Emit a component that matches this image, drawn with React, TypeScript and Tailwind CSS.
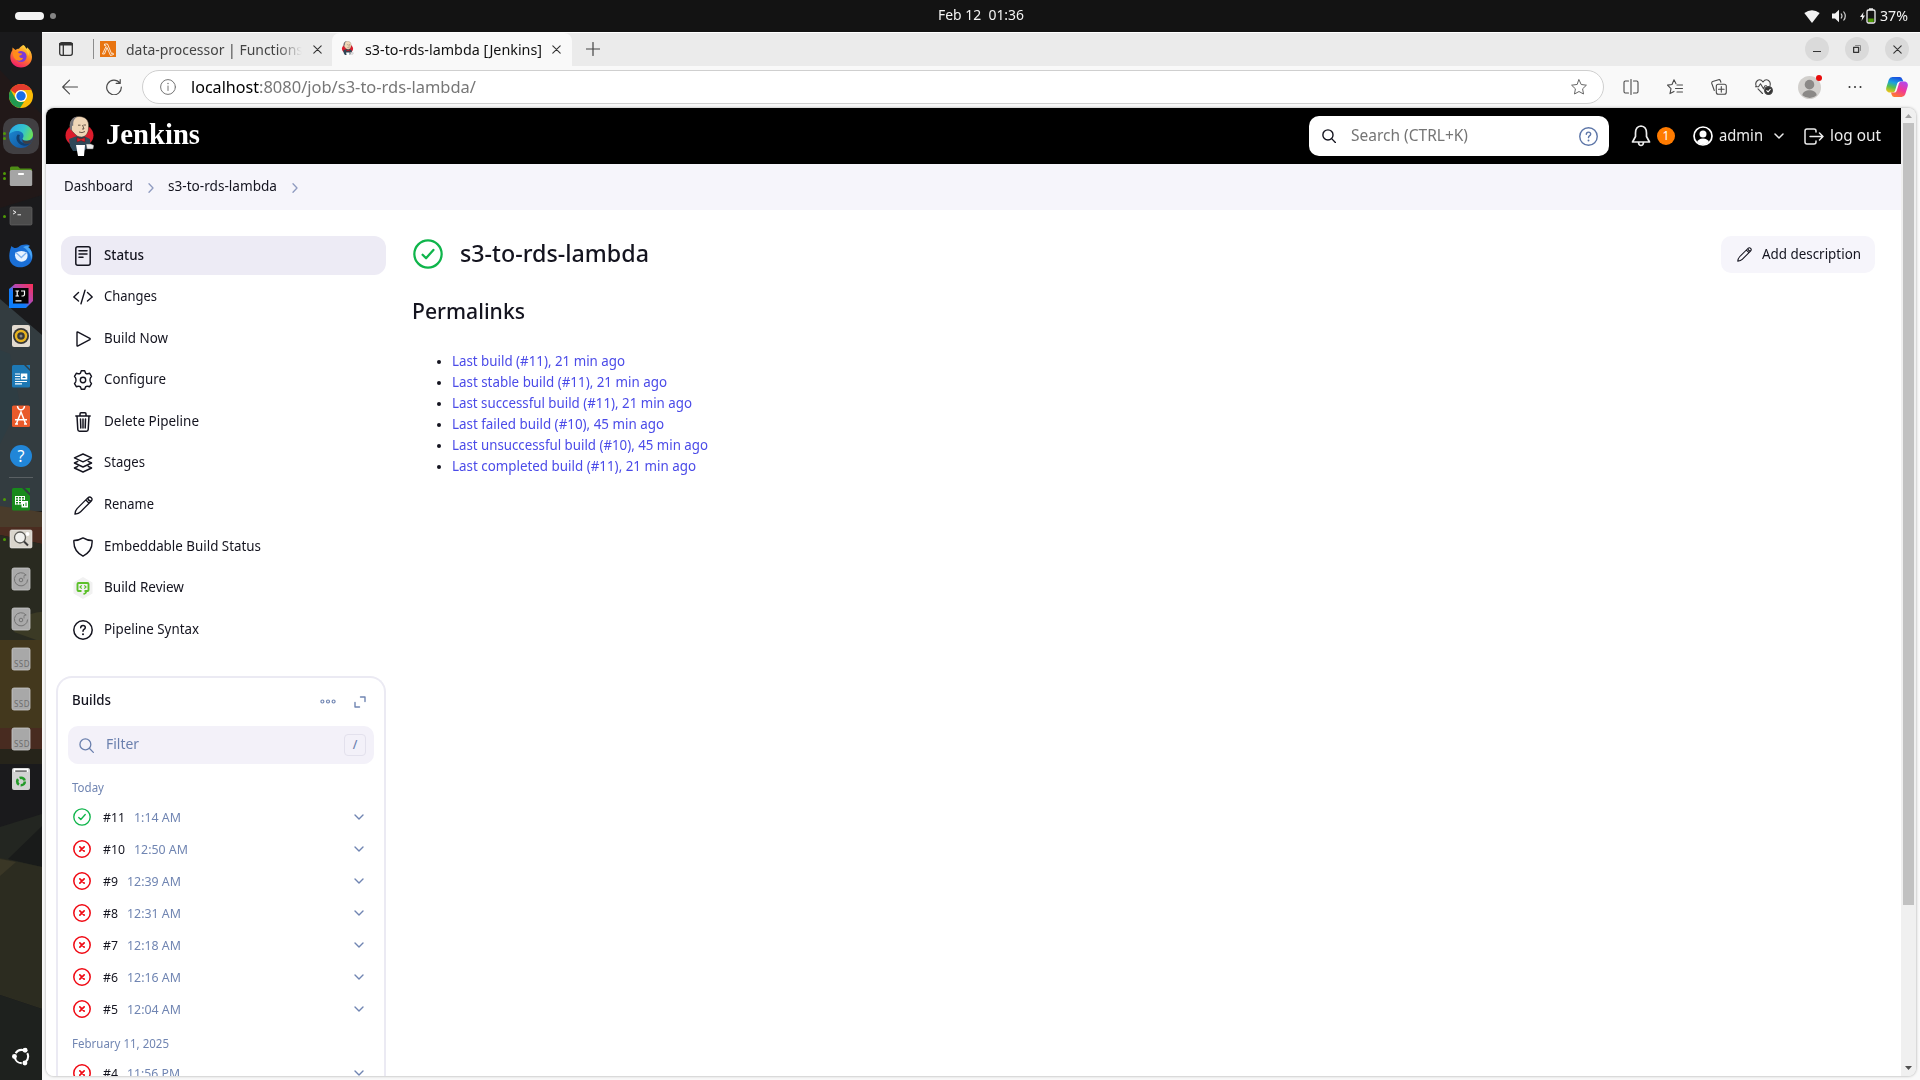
import { useLayoutEffect, useRef, type ReactNode } from "react";

/* One line of text condensed or widened to an exact advance width. */
function Fit({ w, className = "", children }: { w: number; className?: string; children: ReactNode }) {
  const ref = useRef<HTMLSpanElement>(null);
  useLayoutEffect(() => {
    const el = ref.current;
    if (!el) return;
    el.style.transform = `scaleX(${w / el.getBoundingClientRect().width})`;
    return () => {
      el.style.transform = "";
    };
  }, [w]);
  return (
    <span className={`block shrink-0 ${className}`} style={{ width: w }}>
      <span ref={ref} className="inline-block origin-left whitespace-pre align-top">
        {children}
      </span>
    </span>
  );
}

type SvgProps = { className?: string; children: ReactNode; box?: string; sw?: number };
function Line({ className = "", children, box = "0 0 24 24", sw = 1.5 }: SvgProps) {
  return (
    <svg viewBox={box} className={`shrink-0 ${className}`} fill="none" stroke="currentColor" strokeWidth={sw} strokeLinecap="round" strokeLinejoin="round">
      {children}
    </svg>
  );
}

function Pic({ className = "", children, box = "0 0 24 24" }: SvgProps) {
  return (
    <svg viewBox={box} className={`shrink-0 ${className}`}>
      {children}
    </svg>
  );
}

/* ---------- Dock ---------- */

function Disk() {
  return (
    <Pic className="h-6 w-6">
      <rect x="3" y="1" width="18" height="22" rx="2" fill="#aaaaaa" stroke="#c8c8c8" strokeWidth=".8" />
      <path d="M17 8a6.600 6.600 0 1 0 1.600 4.500" fill="none" stroke="#747474" strokeWidth="1" />
      <circle cx="12" cy="13" r="1.800" fill="none" stroke="#747474" />
      <path d="M15 11.500v-3l2.500-.5" stroke="#747474" fill="none" strokeWidth=".8" />
    </Pic>
  );
}

function Ssd() {
  return (
    <Pic className="h-6 w-6">
      <rect x="3" y="1" width="18" height="22" rx="2" fill="#a8a8a8" stroke="#c8c8c8" strokeWidth=".8" />
      <text x="5" y="20" fontSize="8" fill="#6e6e6e" fontFamily="Noto Sans, sans-serif" textLength="15.500">SSD</text>
    </Pic>
  );
}

const dockTop: { dots: number; icon: ReactNode; active?: boolean }[] = [
  {
    dots: 0,
    icon: (
      <Pic className="h-6 w-6">
        <defs>
          <linearGradient id="ff" x1=".8" y1="0" x2=".3" y2="1"><stop offset="0" stopColor="#ffe043" /><stop offset=".45" stopColor="#ff8a1f" /><stop offset="1" stopColor="#f0186e" /></linearGradient>
        </defs>
        <path d="M14.500 1c2 1.500 2.500 3 3 4 .5-.5.5-1.200.5-1.800C21 5.500 23 9 23 13c0 6-5 10.500-11 10.500S1.300 19 1.300 13c0-2.500.8-5 2-6.500L3.500 3.500l3 2.500c1-.8 2-1.200 3.500-1.200C11 3 13 1.500 14.500 1z" fill="url(#ff)" />
        <circle cx="12" cy="12.500" r="5.600" fill="#7c3ad8" />
        <path d="M4 8c3-1 5 0 6 1.200l3 .3c.3 1.500-2 2-2.800 2.300.2 2 2 2.700 4 2-1 3-5 4-8 1.500C4 13 3.500 10 4 8z" fill="#ff8b1a" />
        <path d="M13 1.800c3 3 6 4 6 10 1-1 1-4 0-6" fill="#ffd43a" />
      </Pic>
    ),
  },
  {
    dots: 0,
    icon: (
      <Pic className="h-6 w-6">
        <circle cx="12" cy="12" r="12" fill="#fbbc05" />
        <path d="M1.600 6A12 12 0 0 1 22.400 6H12a6 6 0 0 0-5.500 3.500z" fill="#e33b2e" />
        <path d="M1.600 6l5.200 9A6 6 0 0 0 12 18l3 0-4 6A12 12 0 0 1 1.600 6z" fill="#219a50" />
        <circle cx="12" cy="12" r="6" fill="#fff" />
        <circle cx="12" cy="12" r="4.700" fill="#1a6ee8" />
      </Pic>
    ),
  },
  {
    dots: 2,
    active: true,
    icon: (
      <Pic className="h-6 w-6">
        <defs>
          <linearGradient id="eg" x1="0" y1=".2" x2="1" y2=".5"><stop offset="0" stopColor="#2aa5e8" /><stop offset=".6" stopColor="#34c5cc" /><stop offset="1" stopColor="#6be05a" /></linearGradient>
          <linearGradient id="eb" x1="0" y1="0" x2="1" y2="1"><stop offset="0" stopColor="#1b8fd8" /><stop offset="1" stopColor="#124a94" /></linearGradient>
        </defs>
        <circle cx="12" cy="12" r="12" fill="url(#eb)" />
        <path d="M.2 10.500C1 4.500 6 0 12 0c7 0 12 5 12 10.500 0 4-3 6-6.500 6-3 0-4-1-4-1.800 0-.7 1-1.200 1-3 0-2.500-2.500-4.700-6-4.700C4.500 7 1 9 .2 10.500z" fill="url(#eg)" />
        <path d="M8.700 10.500C6 13 7.500 20 14 21.500c3 .7 6-.5 7.500-2.500-3 1.300-10 1-11-4-.3-1.800 0-3 .5-4z" fill="#11406f" />
        <path d="M13.500 14.500c-.3 1.500 1.500 2.700 4.500 2.500 2 0 4-.7 5.500-2-.4 1.800-1 3-1.800 4-5 2-9.200.5-8.200-4.500z" fill="#403e44" />
      </Pic>
    ),
  },
  {
    dots: 2,
    icon: (
      <Pic className="h-6 w-6">
        <path d="M1 4a1.500 1.500 0 0 1 1.500-1.500H9l2 2h10.500A1.500 1.500 0 0 1 23 6v6H1z" fill="#4e8c16" />
        <rect x=".8" y="6" width="22.400" height="16" rx="1.500" fill="#a5a5a5" />
        <rect x="9" y="9" width="6" height="2" rx=".8" fill="#fff" />
      </Pic>
    ),
  },
  {
    dots: 1,
    icon: (
      <Pic className="h-6 w-6">
        <rect x="1" y="3" width="22" height="18" rx="1.500" fill="#4c4c4c" stroke="#666" strokeWidth=".7" />
        <path d="M4 6.500l3 1.800-3 1.800M8.500 10.800h3.500" stroke="#eee" fill="none" />
      </Pic>
    ),
  },
  {
    dots: 0,
    icon: (
      <Pic className="h-6 w-6">
        <path d="M2.500 2c2.500 2.500 4.500 2.500 7 1C13 0 19 0 21 2c-1 0-2 .3-2 1 6 4 6 14 0 18-6 4-15 3-18-4C-.5 12 .5 7 2.500 2z" fill="#1a6fd6" />
        <path d="M14 3c4-2 7-1 7-1l-2 1c4 3 5 8 3 13 0-6-3-10-8-13z" fill="#4aa6f5" />
        <path d="M6.500 8.500q6-3 11.500 0 1.500 4.500-1 7.500-4.500 3.500-9 0-3-3-1.500-7.500z" fill="#e9f3ff" />
        <path d="M7 8.500l5.300 5 5.300-5" stroke="#7fb2ee" fill="none" strokeWidth="1.300" />
      </Pic>
    ),
  },
  {
    dots: 0,
    icon: (
      <Pic className="h-6 w-6">
        <defs><linearGradient id="ij" x1="1" y1="0" x2="0" y2="1"><stop offset="0" stopColor="#ff2e52" /><stop offset=".45" stopColor="#b04ab8" /><stop offset=".6" stopColor="#147cf8" /><stop offset="1" stopColor="#087cfa" /></linearGradient></defs>
        <path d="M0 5l6-5h18v17l-7 7H0z" fill="url(#ij)" />
        <rect x="4" y="4" width="15.500" height="15.500" fill="#050505" />
        <path d="M6.500 7h3.500M8.200 7v5M6.500 12h3.500M12 7h3.500v3.500q0 1.600-3 1.500M6.500 16.800h6" stroke="#fff" strokeWidth="1.200" fill="none" />
      </Pic>
    ),
  },
  {
    dots: 0,
    icon: (
      <Pic className="h-6 w-6">
        <rect x="3" y="1" width="18" height="22" rx="2" fill="#e3dbd0" />
        <circle cx="12" cy="12" r="8" fill="#383838" />
        <circle cx="12" cy="12" r="5" fill="none" stroke="#e7b320" strokeWidth="2.400" />
        <circle cx="12" cy="12" r="1.500" fill="#888" />
      </Pic>
    ),
  },
  {
    dots: 0,
    icon: (
      <Pic className="h-6 w-6">
        <path d="M3 2.500A1.500 1.500 0 0 1 4.500 1H15l6 6v15a1.500 1.500 0 0 1-1.500 1.500h-15A1.500 1.500 0 0 1 3 22z" fill="#1d78b4" />
        <path d="M17 1h4v4z" fill="#1d78b4" />
        <path d="M6 10h5M6 12.500h5M6 15h5M6 17.500h12M6 19.800h7" stroke="#fff" strokeWidth="1.200" />
        <rect x="11.800" y="9.500" width="6.500" height="6" fill="#fff" />
        <path d="M13 14l2-2 2 2z" fill="#1d78b4" />
      </Pic>
    ),
  },
  {
    dots: 0,
    icon: (
      <Pic className="h-6 w-6">
        <rect x="3" y="1.500" width="18" height="21.500" rx="1.500" fill="#e95a2b" />
        <path d="M8.500 2c.5 5 6.500 5 7 0M7.500 19.500L12 8l4.500 11.500M6 15.800h12M6 20h3M15 20h3" stroke="#fff" strokeWidth="1.500" fill="none" />
      </Pic>
    ),
  },
  {
    dots: 0,
    icon: (
      <Pic className="h-6 w-6">
        <circle cx="12" cy="12" r="11" fill="#2186d8" />
        <text x="12" y="18" textAnchor="middle" fontSize="16" fill="#fff" fontFamily="Noto Sans, sans-serif">?</text>
      </Pic>
    ),
  },
];

const dockBottom: { dots: number; icon: ReactNode; active?: boolean }[] = [
  {
    dots: 1,
    icon: (
      <Pic className="h-6 w-6">
        <path d="M3 2.500A1.500 1.500 0 0 1 4.500 1H13l8 8v13a1.500 1.500 0 0 1-1.500 1.500h-15A1.500 1.500 0 0 1 3 22z" fill="#188a1c" />
        <path d="M16 1h5v5z" fill="#168c1a" />
        <path d="M6 9.500h10M6 12h10M6 14.500h7M6 17h6M6.500 9v8.500M9.500 9v8.500M12.500 9v8.500M15.500 9v4" stroke="#fff" strokeWidth="1" />
        <rect x="12.500" y="14" width="6.500" height="6.500" fill="#fff" />
        <path d="M14.500 19v-2M17 19v-3.500" stroke="#188a1c" />
      </Pic>
    ),
  },
  {
    dots: 1,
    icon: (
      <Pic className="h-6 w-6">
        <rect x="1" y="3" width="22" height="18" rx="1.500" fill="#d9d5cc" stroke="#eee" strokeWidth=".6" />
        <circle cx="18.500" cy="7" r="2" fill="#fff" />
        <circle cx="11" cy="10.500" r="5.500" fill="#f1f1ee" stroke="#5c5c58" strokeWidth="1.300" />
        <path d="M15 14.500l4 4" stroke="#3c3c3c" strokeWidth="2" />
      </Pic>
    ),
  },
  { dots: 0, icon: <Disk /> },
  { dots: 0, icon: <Disk /> },
  { dots: 0, icon: <Ssd /> },
  { dots: 0, icon: <Ssd /> },
  { dots: 0, icon: <Ssd /> },
  {
    dots: 0,
    icon: (
      <Pic className="h-6 w-6">
        <rect x="3" y="1" width="18" height="22" rx="2" fill="#d2d2d2" />
        <path d="M5.500 5V2.500h13V5" stroke="#fff" strokeWidth="1.500" fill="#777" />
        <circle cx="12" cy="14.500" r="3.800" fill="none" stroke="#239a28" strokeWidth="2.600" strokeDasharray="6.200 1.800" />
      </Pic>
    ),
  },
];

function DockCell({ dots, icon, active }: { dots: number; icon: ReactNode; active?: boolean }) {
  return (
    <div className="relative flex h-10 w-[42px] shrink-0 items-center justify-center">
      {active && <div className="absolute inset-x-[3px] inset-y-[2px] rounded-[10px] bg-[#413f42]" />}
      <div className="absolute top-0 left-[3px] flex h-10 flex-col justify-center gap-[2px]">
        {Array.from({ length: dots }, (_, i) => (
          <div key={i} className="size-[3px] rounded-full bg-[#4e9a06]" />
        ))}
      </div>
      <div className="relative">{icon}</div>
    </div>
  );
}

function Dock() {
  return (
    <aside className="relative flex w-[42px] shrink-0 flex-col overflow-hidden bg-[#1a1a1c] pt-1">
      <svg className="absolute inset-0 h-full w-full" viewBox="0 32 42 1048" preserveAspectRatio="none">
        <path d="M0 70l42 45v80L0 208z" fill="#211818" />
        <path d="M0 299l42 36v176H0z" fill="#333c40" />
        <path d="M0 350l10 4 10 50-20 40z" fill="#2c3e46" opacity=".6" />
        <path d="M0 506l42 6v16H0z" fill="#4a3c2b" />
        <path d="M0 527h42v17L0 535z" fill="#4b2c20" />
        <path d="M0 535l42 9v97H0z" fill="#292a20" />
        <path d="M14 632c8-16 18-20 28-20v30z" fill="#3b3a25" />
        <path d="M0 640h42v88H0z" fill="#43381d" />
        <path d="M0 728h42v21H0z" fill="#482b20" />
        <path d="M0 749h42v15H0z" fill="#26241a" />
        <path d="M0 827l42-13v60L0 862z" fill="#232621" />
        <path d="M42 826L8 859l34 8z" fill="#191b1a" />
        <path d="M0 858l42 9v142L0 995z" fill="#2c2c20" />
        <path d="M0 859l16 3-16 14z" fill="#3a3726" />
        <path d="M0 995l42 14v71H0z" fill="#1e211e" />
      </svg>
      {dockTop.map((d, i) => (
        <DockCell key={i} {...d} />
      ))}
      <div className="relative mx-auto my-px h-px w-6 bg-[#5a6063]" />
      {dockBottom.map((d, i) => (
        <DockCell key={i} {...d} />
      ))}
      <div className="relative mt-auto mb-[14px] flex justify-center">
        <Pic className="size-[19px]" box="0 0 20 20">
          <circle cx="10" cy="10" r="7" fill="none" stroke="#fff" strokeWidth="2.200" strokeDasharray="10 4.660" strokeDashoffset="4" />
          <circle cx="2.600" cy="10" r="2.600" fill="#fff" />
          <circle cx="13.800" cy="3.400" r="2.600" fill="#fff" />
          <circle cx="13.600" cy="16.800" r="2.600" fill="#fff" />
        </Pic>
      </div>
    </aside>
  );
}

/* ---------- Desktop bar ---------- */

function TopBar() {
  return (
    <header className="grid h-8 shrink-0 grid-cols-[1fr_auto_1fr] items-center bg-[#131313] text-[#f2f2f2]">
      <div className="flex items-center gap-[6px] pl-[15px]">
        <div className="h-2 w-[29px] rounded-full bg-[#f4f4f4]" />
        <div className="size-[6px] rounded-full bg-[#858585]" />
      </div>
      <Fit w={86} className="ml-[42px] pb-[2px] text-[14px] leading-[30px]">Feb 12  01:36</Fit>
      <div className="flex items-center justify-end pr-3">
        <Pic className="h-[13px] w-4" box="0 0 16 13"><path d="M8 13L.3 3Q8-2.500 15.700 3z" fill="#f2f2f2" /></Pic>
        <Pic className="ml-3 h-[14px] w-4" box="0 0 16 14">
          <path d="M0 4.500h3L7 .8v12.400L3 9.500H0z" fill="#f2f2f2" />
          <path d="M9 4.500q2 2.500 0 5M11.500 2.500q3.600 4.500 0 9" fill="none" stroke="#cfcfcf" strokeWidth="1.200" />
        </Pic>
        <Pic className="ml-3 h-4 w-4" box="0 0 16 16">
          <path d="M3.600 4L0 9h2.200L1.500 13 5 7.500H2.900z" fill="#f2f2f2" />
          <rect x="7" y="2" width="8" height="13" rx="1.500" fill="none" stroke="#f2f2f2" strokeWidth="1.300" />
          <rect x="9" y=".3" width="4" height="1.600" fill="#f2f2f2" />
          <rect x="8.300" y="10.500" width="5.400" height="3.500" fill="#4e9a06" />
        </Pic>
        <Fit w={28} className="ml-1 text-[14px] leading-8">37%</Fit>
      </div>
    </header>
  );
}

/* ---------- Browser chrome ---------- */

function Butler({ className }: { className: string }) {
  return (
    <Pic className={className} box="0 0 29 40">
      <ellipse cx="14.500" cy="19.500" rx="14" ry="11.500" fill="#dc1c2c" />
      <path d="M4 23l8-3h7l6 3 .5 8-4 2-3 2H8l-3-5z" fill="#2f4858" />
      <path d="M5 12C4 5 8 .5 14 .5S24.500 4 23.500 12c0 5-3 9-7 9-3 0-5-1-7-3.500l-2-2z" fill="#f0d6b7" stroke="#3a3028" strokeWidth=".5" />
      <path d="M5.500 14C3.500 6 7 1 12.500.8 8.500 3 8 6 8.300 9.500l-1.300.5v4z" fill="#77757a" />
      <path d="M13 9.200h2.500M18.500 9H21M17.500 9l1.500 4h-2M14 16q3 1.500 6-.5" stroke="#49392d" strokeWidth=".8" fill="none" />
      <path d="M12 21.500l4 1.500 4-1.500v4.500l-4-1.500-4 1.500z" fill="#d8202c" stroke="#5e1414" strokeWidth=".5" />
      <path d="M11 29h9l-1 11h-6z" fill="#fff" />
      <path d="M21 28h5l3 1.500-1 3.500h-6z" fill="#eee" stroke="#555" strokeWidth=".5" />
    </Pic>
  );
}

function Cross({ className = "" }: { className?: string }) {
  return <Line className={`size-[9px] text-[#333] ${className}`} box="0 0 9 9" sw={1.1}><path d="M.8.8l7.400 7.400M8.200.8L.8 8.200" /></Line>;
}

function TabStrip() {
  return (
    <div className="flex h-[34px] shrink-0 items-stretch border-t border-white bg-[#ebebeb] pb-px text-[14px]">
      <div className="flex w-[51px] items-center pl-[17px] text-[#333]">
        <Line className="size-[14px]" box="0 0 14 14" sw={1.3}>
          <rect x=".7" y=".7" width="12.600" height="12.600" rx="2" /><path d="M1 2.200h12" strokeWidth="2.600" /><path d="M4.300 3v10" />
        </Line>
      </div>
      <div className="flex w-[239px] items-center">
        <div className="h-5 w-px bg-[#8c8c8c]" />
        <Pic className="ml-[6px] size-4" box="0 0 16 16">
          <rect width="16" height="16" fill="#e87410" />
          <path d="M4.500 3h3l4 9.500 1.500-.5.5 1.500-3 1L7 6.500 4.500 13H2.500L6 5.500 5.500 4.500h-1z" fill="none" stroke="#fff" strokeWidth=".8" />
        </Pic>
        <div className="ml-[10px] w-[176px] overflow-hidden [mask-image:linear-gradient(to_right,black_86%,transparent)]">
          <Fit w={177} className="text-[#444]">data-processor | Functions</Fit>
        </div>
        <Cross className="ml-[11px]" />
      </div>
      <div className="-mb-px flex w-[240px] items-center rounded-t-lg bg-[#f9f9f9] pb-px pl-[8px]">
        <Butler className="h-4 w-[15px]" />
        <Fit w={177} className="ml-[10px] text-[#111]">s3-to-rds-lambda [Jenkins]</Fit>
        <Cross className="ml-[10px]" />
      </div>
      <div className="flex items-center pl-[14px] text-[#444]">
        <Line className="size-[14px]" box="0 0 14 14" sw={1.2}><path d="M7 .5v13M.5 7h13" /></Line>
      </div>
      <div className="ml-auto flex items-center gap-4 pr-[11px] text-[#333]">
        <div className="flex size-6 items-center justify-center rounded-full bg-[#dadada]"><Line className="size-2" box="0 0 8 8" sw={1.2}><path d="M.5 6.500h7" /></Line></div>
        <div className="flex size-6 items-center justify-center rounded-full bg-[#dadada]"><Line className="size-2" box="0 0 8 8" sw={1}><path d="M.6 2.300h5v5h-5z" strokeWidth="1.300" /><path d="M2.500.5h5v5" stroke="#888" /></Line></div>
        <div className="flex size-6 items-center justify-center rounded-full bg-[#dadada]"><Cross /></div>
      </div>
    </div>
  );
}

function Toolbar() {
  return (
    <div className="flex h-[42px] shrink-0 items-center bg-[#f9f9f9] text-[#4a4a4a]">
      <Line className="ml-5 size-4" box="0 0 16 16" sw={1.1}><path d="M15.500 8H.8M7.500 1.200L.7 8l6.800 6.800" /></Line>
      <Line className="ml-7 size-4" box="0 0 16 16" sw={1.2}><path d="M13.800 4A7.300 7.300 0 1 0 15.300 8M14.200.6V4.400h-4" /></Line>
      <div className="ml-5 flex h-[34px] w-[1462px] items-center rounded-full border border-[#cfcfcf] bg-white pr-4 pl-[17px]">
        <Line className="size-4 text-[#757575]" box="0 0 16 16" sw={1}><circle cx="8" cy="8" r="7.400" /><path d="M8 7v4.500" /><path d="M8 4.400v.2" strokeWidth="1.500" /></Line>
        <div className="ml-[15px] flex text-[16px] leading-6">
          <Fit w={68} className="text-black">localhost</Fit>
          <Fit w={217} className="text-[#777]">:8080/job/s3-to-rds-lambda/</Fit>
        </div>
        <Line className="ml-auto size-4 text-[#666]" box="0 0 16 16" sw={1}><path d="M8 .8l2.200 4.700 5.200.7-3.800 3.600.9 5.200L8 12.500 3.500 15l.9-5.200L.6 6.200l5.200-.7z" /></Line>
      </div>
      <Line className="ml-[19px] size-4" box="0 0 16 16" sw={1.1}><path d="M8 .5v15M5.500 2H2.300Q1 2 1 3.500v9Q1 14 2.300 14h3.200M10.500 2h3.200Q15 2 15 3.500v9q0 1.500-1.300 1.500h-3.200" /></Line>
      <Line className="ml-7 size-4" box="0 0 16 16" sw={1.1}><path d="M9 4.800L7 .8 5 5.500l-4.500.6L4 9.600l-1 5L7 12.400M10 6h5.500M8.500 9.500h7M10 13h5.500" /></Line>
      <Line className="ml-7 size-4" box="0 0 16 16" sw={1.1}><rect x="5.300" y="5.300" width="10" height="10" rx="2" /><path d="M10.300 7.500v5.600M7.500 10.300h5.600M3.300 11.500L.8 4.500q-.4-1.300.9-1.900L7.500.7q1.300-.4 1.800.8l.6 1.700" /></Line>
      <Line className="ml-7 h-4 w-[18px]" box="0 0 18 16" sw={1.1}><path d="M8 3Q5.500-.5 2.500 1.500-.5 4 1.500 7.500M8 3q2.500-3.500 5.500-1.500Q16 3.500 15 6.500M3 9.800l4.500 4.700M.5 7.800h3l2-3 3 5 1.500-3h1.500" /><circle cx="13.500" cy="11.500" r="3.900" fill="#333" /><path d="M11.800 11.600l1.300 1.300 2.200-2.500" stroke="#fff" /></Line>
      <div className="relative ml-[25px] size-[23px]">
        <Pic className="size-[23px]"><circle cx="12" cy="12" r="12" fill="#d2d0cd" /><circle cx="12" cy="9" r="5" fill="#8b8987" /><path d="M4.500 20c.5-7 14.500-7 15 0q-7 6-15 0z" fill="#8b8987" /></Pic>
        <div className="absolute -top-px -right-px size-[6px] rounded-full bg-[#e80c0c]" />
      </div>
      <Line className="ml-[26px] size-4 text-[#333]" box="0 0 16 16" sw={2}><path d="M2.500 8h.01M8 8h.01M13.500 8h.01" /></Line>
      <Pic className="ml-[23px] size-[22px]">
        <defs>
          <linearGradient id="ca" x1=".5" y1="0" x2=".2" y2="1"><stop offset="0" stopColor="#1a52e0" /><stop offset=".35" stopColor="#1a9fe0" /><stop offset=".65" stopColor="#58c24a" /><stop offset="1" stopColor="#f5c518" /></linearGradient>
          <linearGradient id="cb" x1=".8" y1="0" x2=".3" y2="1"><stop offset="0" stopColor="#b04af0" /><stop offset=".5" stopColor="#f0389a" /><stop offset="1" stopColor="#ff7a2e" /></linearGradient>
        </defs>
        <path d="M7 1h8q2 0 2.800 2.500L19 6h-4q-2 0-2.700 2l-2.500 8Q9 18 7 18H3q-4-1-2.500-6L3 4q1-3 4-3z" fill="url(#ca)" />
        <path d="M17 23H9q-2 0-2.800-2.500L5.500 18H9q2 0 2.700-2l2.500-8Q15 6 17 6h4q4 1 2.500 6L21 20q-1 3-4 3z" fill="url(#cb)" />
      </Pic>
    </div>
  );
}

/* ---------- Jenkins ---------- */

function PencilIcon({ className }: { className: string }) {
  return <Line className={className} box="0 0 20 20" sw={1.4}><path d="M1 19q.5-4 2.500-6L14.500 2q2-1.800 3.700-.2T18 5.500L7 16.500Q5 18.500 1 19zM12.500 4.200l3.400 3.400M14.500 2q.3 3 3.500 3.500" /></Line>;
}

function HelpIcon({ className, sw = 1.5 }: { className: string; sw?: number }) {
  return <Line className={className} box="0 0 20 20" sw={sw}><circle cx="10" cy="10" r="9.200" /><path d="M7.700 7.700q.1-2.300 2.300-2.300t2.300 2q0 1.200-1.300 2-1 .6-1 1.800" /><path d="M10 14.200v.1" strokeWidth={sw + 0.5} /></Line>;
}

function Magnifier({ className, sw }: { className: string; sw: number }) {
  return <Line className={className} box="0 0 16 16" sw={sw}><circle cx="6.800" cy="6.800" r="5.800" /><path d="M11 11l4.300 4.300" /></Line>;
}

function Chevron({ className, sw = 1.5 }: { className: string; sw?: number }) {
  return <Line className={className} box="0 0 10 6" sw={sw}><path d="M1 1l4 4 4-4" /></Line>;
}

function ChevronRight() {
  return <Line className="mx-[14.500px] mt-[3px] h-[10px] w-[6px] text-[#8f9bc0]" box="0 0 6 10" sw={1.3}><path d="M1 .7L5 5 1 9.300" /></Line>;
}

function JenkinsHeader() {
  return (
    <div className="flex h-14 shrink-0 items-center bg-black text-[16px] text-[#ececec]">
      <Butler className="ml-[19px] h-10 w-[29px]" />
      <Fit w={94} className="ml-3 pb-1 font-['Liberation_Serif',serif] text-[30px] leading-9 font-bold text-white">Jenkins</Fit>
      <div className="ml-auto flex h-10 w-[300px] items-center rounded-[10px] bg-white pr-[11px] pl-[13px]">
        <Magnifier className="size-[14px] text-[#14141f]" sw={1.6} />
        <Fit w={117} className="ml-[15px] pb-[2px] text-[#757575]">Search (CTRL+K)</Fit>
        <HelpIcon className="ml-auto size-[19px] text-[#5d76a8]" />
      </div>
      <Line className="ml-[22px] h-[22px] w-5" box="0 0 20 22" sw={1.7}><path d="M10 1Q4.500 1.500 4.500 8v3.500L1.500 17h17l-3-5.500V8Q15.500 1.500 10 1zM7.500 17.500q.3 3 2.500 3t2.500-3" /></Line>
      <div className="ml-[6px] flex size-[18px] items-center justify-center rounded-full bg-[#ff7b00] text-[12px] text-white">1</div>
      <Line className="ml-[18px] size-5 text-white" box="0 0 20 20" sw={1.7}><circle cx="10" cy="10" r="9" /><circle cx="10" cy="8" r="3.500" fill="currentColor" stroke="none" /><path d="M4 16q1.500-3.600 6-3.600t6 3.600q-6 5-12 0z" fill="currentColor" stroke="none" /></Line>
      <Fit w={44} className="ml-[6px] pb-[2px]">admin</Fit>
      <Chevron className="ml-[11px] h-[6px] w-[10px]" />
      <Line className="ml-5 h-[17px] w-5" box="0 0 20 17" sw={1.5}><path d="M12 4V3q0-2-2-2H3Q1 1 1 3v11q0 2 2 2h7q2 0 2-2v-1M6 8.500h13M15.500 5L19 8.500 15.500 12" /></Line>
      <Fit w={51} className="mr-5 ml-[6px] pb-[2px]">log out</Fit>
    </div>
  );
}

const tasks: { label: string; w: number; icon: ReactNode }[] = [
  { label: "Status", w: 40, icon: <Line className="h-5 w-4" box="0 0 16 20" sw={1.5}><rect x=".8" y=".8" width="14.400" height="18.400" rx="2" /><path d="M4 4.700h8M4 8h8M4 11.300h4" /></Line> },
  { label: "Changes", w: 53, icon: <Line className="h-4 w-5" box="0 0 20 16" sw={1.4}><path d="M5.500 3.500L.8 8l4.700 4M14.500 3.500L19.200 8l-4.700 4M12 1.200L8 14.800" /></Line> },
  { label: "Build Now", w: 64, icon: <Line className="h-4 w-[15px]" box="0 0 15 16" sw={1.4}><path d="M1 1.600v12.800q0 1 1 .5L13.800 8.600q.8-.6 0-1.200L2 1.100q-1-.5-1 .5z" /></Line> },
  {
    label: "Configure",
    w: 62,
    icon: (
      <Line className="size-5" box="0 0 20 20" sw={1.4}>
        <circle cx="10" cy="10" r="2.700" />
        <path d="M8.300.8h3.400l.8 2.300q1.400 1 2.300.6l1.900-.4 1.800 3-1.200 1.900q-.7 1.800 0 3.600l1.200 1.900-1.800 3-1.900-.4q-1-.4-2.300.6l-.8 2.300H8.300l-.8-2.300q-1.300-1-2.300-.6l-1.900.4-1.800-3 1.200-1.900q.7-1.800 0-3.600L1.500 6.300l1.800-3 1.900.4q.9.400 2.300-.6z" />
      </Line>
    ),
  },
  { label: "Delete Pipeline", w: 95, icon: <Line className="h-5 w-4" box="0 0 16 20" sw={1.5}><path d="M.8 4h14.400M5 3.700V2q0-1.200 1-1.200h4q1 0 1 1.200v1.700M2 4l.8 13.500q.1 1.700 1.700 1.700h7q1.600 0 1.700-1.700L14 4M5.500 7l.3 9M8 7v9M10.500 7l-.3 9" /></Line> },
  { label: "Stages", w: 41, icon: <Line className="size-5" box="0 0 20 20" sw={1.4}><path d="M10 1l8.600 3.900L10 8.800 1.400 4.900zM4.800 8.300L1.400 10l8.600 4 8.600-4-3.400-1.700M4.800 13.300L1.400 15l8.600 4 8.600-4-3.400-1.700" /></Line> },
  { label: "Rename", w: 50, icon: <PencilIcon className="size-[19px]" /> },
  { label: "Embeddable Build Status", w: 157, icon: <Line className="size-5" box="0 0 20 20" sw={1.4}><path d="M10 .9Q6 3.500.9 3.500.2 14 10 19.200 19.800 14 19.100 3.500 14 3.500 10 .9z" /></Line> },
  {
    label: "Build Review",
    w: 80,
    icon: (
      <Pic className="size-[22px]" box="0 0 22 22">
        <path d="M11 0l9.500 5.500v11L11 22l-9.500-5.500v-11z" fill="#f1f1f1" />
        <path d="M9.500 14H6.500q-1 0-1-1V7q0-1 1-1h9q1 0 1 1v6q0 1-1 1h-3M14 14q.5 2.500-2.500 3" fill="none" stroke="#5cc02a" strokeWidth="1.900" />
        <path d="M9.700 8.300L8 10l1.700 1.700M12.300 8.300L14 10l-1.700 1.700" fill="none" stroke="#5cc02a" strokeWidth="1.200" />
      </Pic>
    ),
  },
  { label: "Pipeline Syntax", w: 95, icon: <HelpIcon className="size-5" /> },
];

function StatusIcon({ ok, className }: { ok: boolean; className: string }) {
  return ok ? (
    <Line className={`text-[#0fb54b] ${className}`} box="0 0 20 20" sw={1.5}><circle cx="10" cy="10" r="9.100" /><path d="M6.400 10.500l2.300 2.300 4.900-5.500" /></Line>
  ) : (
    <Line className={`text-[#f00a14] ${className}`} box="0 0 20 20" sw={1.700}><circle cx="10" cy="10" r="9.100" /><path d="M7.600 7.600l4.800 4.800M12.400 7.600l-4.800 4.800" strokeWidth="1.900" /></Line>
  );
}

function BuildRow({ n, nw, time, tw, ok = false }: { n: string; nw: number; time: string; tw: number; ok?: boolean }) {
  return (
    <div className="flex h-8 shrink-0 items-center pr-5 pl-[15px] text-[13px] leading-5">
      <StatusIcon ok={ok} className="size-[18px]" />
      <Fit w={nw} className="ml-3 text-[#14141f]">{n}</Fit>
      <Fit w={tw} className="ml-[9px] text-[#7085b2]">{time}</Fit>
      <Chevron className="ml-auto h-[6px] w-[10px] text-[#7085b2]" sw={1.4} />
    </div>
  );
}

function BuildsCard() {
  return (
    <section className="mt-[27px] ml-[10px] flex w-[330px] flex-col rounded-t-[16px] border-2 border-b-0 border-[#ebeaf3] bg-white">
      <div className="flex h-12 items-center pr-[18px] pb-1 pl-[14px] text-[#7085b2]">
        <Fit w={39} className="text-[14px] leading-5 font-medium text-[#14141f]">Builds</Fit>
        <Line className="mt-[3px] ml-auto h-[5px] w-4" box="0 0 16 5" sw={1.2}><circle cx="2.400" cy="2.500" r="1.500" /><circle cx="8" cy="2.500" r="1.500" /><circle cx="13.600" cy="2.500" r="1.500" /></Line>
        <Line className="mt-[3px] ml-[18px] size-3" box="0 0 12 12" sw={1.4}><path d="M6.500 1H11v4.500M5.500 11H1V6.500" /></Line>
      </div>
      <div className="mx-[10px] flex h-[38px] items-center rounded-[10px] bg-[#f3f1f9] pr-2 pl-[11px] text-[#6b80ae]">
        <Magnifier className="size-[15px]" sw={1.4} />
        <Fit w={33} className="ml-[12px] pb-[2px] text-[14px] leading-5">Filter</Fit>
        <div className="ml-auto flex size-[22px] items-center justify-center rounded-[4px] border border-[#e3e1ed] text-[12px] font-medium">/</div>
      </div>
      <div className="flex h-[37px] items-end pb-[3px] pl-[14px] text-[12px] leading-5 text-[#7085b2]"><Fit w={32}>Today</Fit></div>
      <BuildRow n="#11" nw={22} time="1:14 AM" tw={47} ok />
      <BuildRow n="#10" nw={22} time="12:50 AM" tw={54} />
      <BuildRow n="#9" nw={15} time="12:39 AM" tw={54} />
      <BuildRow n="#8" nw={15} time="12:31 AM" tw={54} />
      <BuildRow n="#7" nw={15} time="12:18 AM" tw={54} />
      <BuildRow n="#6" nw={15} time="12:16 AM" tw={54} />
      <BuildRow n="#5" nw={15} time="12:04 AM" tw={54} />
      <div className="flex h-8 items-center pt-[6px] pl-[14px] text-[12px] leading-5 text-[#7085b2]"><Fit w={97}>February 11, 2025</Fit></div>
      <BuildRow n="#4" nw={15} time="11:56 PM" tw={53} />
    </section>
  );
}

const links: [string, number][] = [
  ["Last build (#11), 21 min ago", 173],
  ["Last stable build (#11), 21 min ago", 215],
  ["Last successful build (#11), 21 min ago", 240],
  ["Last failed build (#10), 45 min ago", 212],
  ["Last unsuccessful build (#10), 45 min ago", 256],
  ["Last completed build (#11), 21 min ago", 244],
];

function JenkinsPage() {
  return (
    <div className="flex min-w-0 flex-1 flex-col overflow-hidden bg-white">
      <JenkinsHeader />
      <nav className="flex h-[46px] shrink-0 items-center bg-[#f6f5fb] pb-[2px] pl-[18px] text-[14px] leading-5 text-[#14141f]">
        <Fit w={69}>Dashboard</Fit>
        <ChevronRight />
        <Fit w={109}>s3-to-rds-lambda</Fit>
        <ChevronRight />
      </nav>
      <div className="flex min-h-0 flex-1">
        <div className="w-[340px] shrink-0 pt-[26px]">
          <ul className="ml-[15px] w-[325px]">
            {tasks.map((t, i) => (
              <li key={t.label} className={`mb-[2.600px] flex h-[39px] items-center rounded-[12px] text-[14px] leading-5 text-[#14141f] ${i === 0 ? "bg-[#edebf5]" : ""}`}>
                <span className="ml-[11px] flex w-[22px] justify-center">{t.icon}</span>
                <Fit w={t.w} className={`ml-[10px] pb-[2px] ${i === 0 ? "font-medium" : ""}`}>{t.label}</Fit>
              </li>
            ))}
          </ul>
          <BuildsCard />
        </div>
        <main className="flex-1 pt-[26px] pr-[26px] pl-[26px]">
          <div className="flex h-[37px] items-center">
            <StatusIcon ok className="mb-[2px] ml-px size-[30px]" />
            <Fit w={189} className="ml-[17px] pb-[3px] text-[24px] leading-8 font-medium text-[#14141f]">s3-to-rds-lambda</Fit>
            <button className="ml-auto flex h-[37px] w-[154px] items-center rounded-[10px] bg-[#f6f5fb] pl-4 text-[14px] leading-5 text-[#14141f]">
              <PencilIcon className="size-[15px]" />
              <Fit w={99} className="ml-[10px] pb-[2px] text-left">Add description</Fit>
            </button>
          </div>
          <h2 className="mt-[21px] text-[22px] leading-8 font-medium text-[#14141f]"><Fit w={113}>Permalinks</Fit></h2>
          <ul className="mt-[24px] text-[14px] leading-[21px]">
            {links.map(([t, w]) => (
              <li key={t} className="flex items-center pl-[25px]">
                <span className="mt-[2px] size-[4px] rounded-full bg-[#14141f]" />
                <Fit w={w} className="ml-[11px] text-[#4b4be8]">{t}</Fit>
              </li>
            ))}
          </ul>
        </main>
      </div>
    </div>
  );
}

function Scrollbar() {
  return (
    <div className="flex w-[15px] shrink-0 flex-col items-center bg-[#f0f0f0]">
      <Pic className="my-[6px] h-1 w-[7px]" box="0 0 7 4"><path d="M3.500 0L7 4H0z" fill="#a3a3a3" /></Pic>
      <div className="-mt-px h-[782px] w-[11px] bg-[#c1c1c1]" />
      <Pic className="mt-auto mb-[6px] h-1 w-[7px]" box="0 0 7 4"><path d="M3.500 4L0 0h7z" fill="#505050" /></Pic>
    </div>
  );
}

export default function App() {
  return (
    <div className="flex h-[1080px] w-[1920px] flex-col overflow-hidden bg-[#131313] font-['Noto_Sans',sans-serif]">
      <TopBar />
      <div className="flex min-h-0 flex-1">
        <Dock />
        <div className="flex min-w-0 flex-1 flex-col bg-[#f9f9f9]">
          <TabStrip />
          <Toolbar />
          <div className="mr-1 mb-1 ml-1 flex min-h-0 flex-1 overflow-hidden rounded-[8px] shadow-[0_0_3px_rgba(0,0,0,0.35)]">
            <JenkinsPage />
            <Scrollbar />
          </div>
        </div>
      </div>
    </div>
  );
}
